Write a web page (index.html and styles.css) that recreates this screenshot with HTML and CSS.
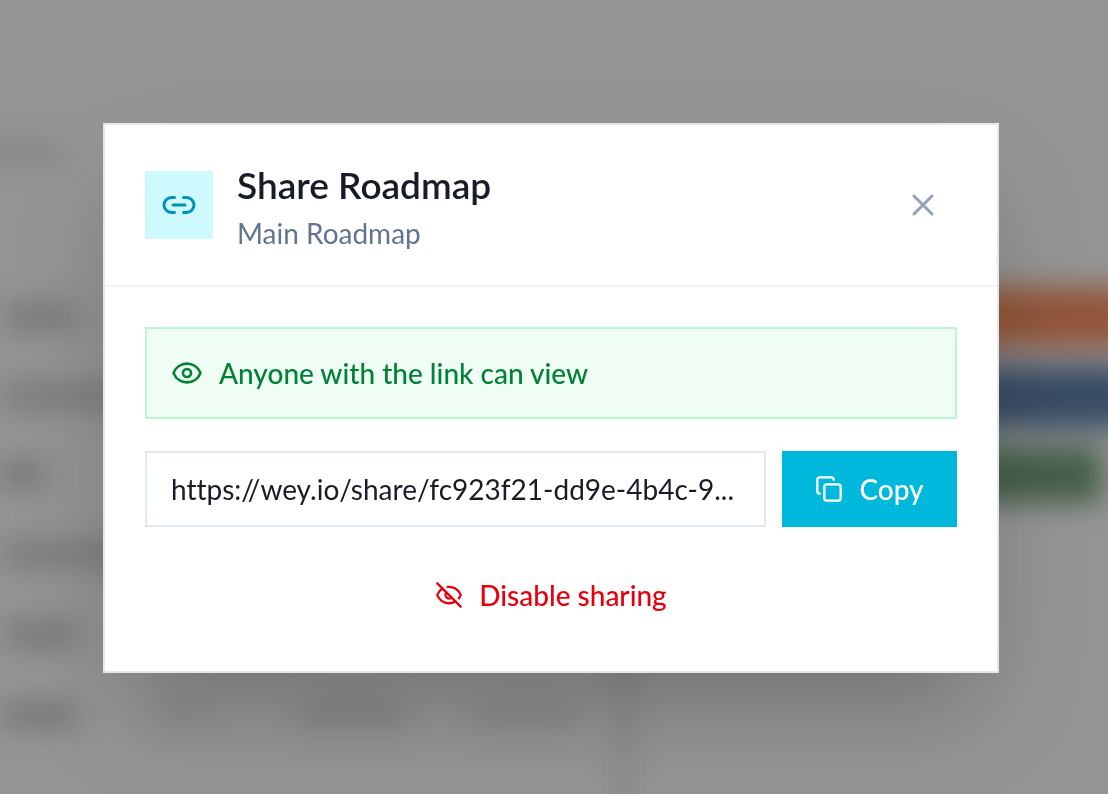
FILE: index.html
```html
<!DOCTYPE html>
<html lang="en">
<head>
<meta charset="utf-8">
<meta name="viewport" content="width=device-width, initial-scale=1">
<title>Share Roadmap</title>
<link rel="stylesheet" href="styles.css">
</head>
<body>
<svg class="backdrop" viewBox="0 0 1108 794" preserveAspectRatio="xMidYMid slice" aria-hidden="true">
  <defs>
    <filter id="soft" x="-200" y="-200" width="1600" height="1200" filterUnits="userSpaceOnUse" color-interpolation-filters="sRGB"><feGaussianBlur stdDeviation="14"/></filter>
  </defs>
  <g filter="url(#soft)">
    <g fill="#72726f">
      <rect x="-40" y="141" width="100" height="24" opacity=".4"/>
      <rect x="2" y="303" width="76" height="28" opacity=".75"/>
      <rect x="0" y="382" width="150" height="28" opacity=".7"/>
      <rect x="-4" y="461" width="50" height="28" opacity=".8"/>
      <rect x="0" y="540" width="150" height="28" opacity=".7"/>
      <rect x="2" y="620" width="78" height="28" opacity=".75"/>
      <rect x="0" y="701" width="78" height="28" opacity=".8"/>
      <rect x="155" y="703" width="50" height="20" opacity=".3"/>
      <rect x="300" y="703" width="104" height="22" opacity=".5"/>
      <rect x="475" y="703" width="104" height="22" opacity=".4"/>
      <rect x="616" y="640" width="16" height="220" opacity=".4"/>
    </g>
    <rect x="850" y="287" width="340" height="60" fill="#92563a"/>
    <rect x="850" y="366" width="340" height="62" fill="#384c63"/>
    <rect x="850" y="447" width="252" height="56" fill="#455f49"/>
  </g>
</svg>

<div class="overlay">
  <section class="dialog" role="dialog" aria-modal="true" aria-labelledby="dialog-title">
    <header class="dialog-header">
      <span class="badge">
        <svg class="icon icon-lg" viewBox="0 0 24 24" aria-hidden="true"><path d="M9 17H7A5 5 0 0 1 7 7h2"/><path d="M15 7h2a5 5 0 1 1 0 10h-2"/><path d="M8 12h8"/></svg>
      </span>
      <div class="heading">
        <h2 class="title" id="dialog-title">Share Roadmap</h2>
        <p class="subtitle">Main Roadmap</p>
      </div>
      <button class="close" type="button" aria-label="Close">
        <svg class="icon icon-lg" viewBox="0 0 24 24" aria-hidden="true"><path d="M18 6 6 18"/><path d="m6 6 12 12"/></svg>
      </button>
    </header>
    <div class="dialog-body">
      <div class="notice">
        <svg class="icon icon-md" viewBox="0 0 24 24" aria-hidden="true"><path d="M2.062 12.348a1 1 0 0 1 0-.696 10.75 10.75 0 0 1 19.876 0 1 1 0 0 1 0 .696 10.75 10.75 0 0 1-19.876 0"/><circle cx="12" cy="12" r="3"/></svg>
        <span>Anyone with the link can view</span>
      </div>
      <div class="link-row">
        <input class="link-input" type="text" readonly aria-label="Share link" value="https://wey.io/share/fc923f21-dd9e-4b4c-9...">
        <button class="copy" type="button">
          <svg class="icon icon-sm" viewBox="0 0 24 24" aria-hidden="true"><rect x="8" y="8" width="14" height="14" rx="2"/><path d="M4 16c-1.1 0-2-.9-2-2V4c0-1.1.9-2 2-2h10c1.1 0 2 .9 2 2"/></svg>
          <span>Copy</span>
        </button>
      </div>
      <button class="disable" type="button">
        <svg class="icon icon-sm" viewBox="0 0 24 24" aria-hidden="true"><path d="M10.733 5.076a10.744 10.744 0 0 1 11.205 6.575 1 1 0 0 1 0 .696 10.747 10.747 0 0 1-1.444 2.49"/><path d="M14.084 14.158a3 3 0 0 1-4.242-4.242"/><path d="M17.479 17.499a10.75 10.75 0 0 1-15.417-5.151 1 1 0 0 1 0-.696 10.75 10.75 0 0 1 4.446-5.143"/><path d="m2 2 20 20"/></svg>
        <span>Disable sharing</span>
      </button>
    </div>
  </section>
</div>
</body>
</html>
```
FILE: styles.css
```css
* {
  box-sizing: border-box;
}

body {
  margin: 0;
  background: #959595;
  color: #171c26;
  font-family: Lato, "Liberation Sans", sans-serif;
  font-size: 28px;
  font-variant-ligatures: none;
  line-height: 40px;
}

button,
input {
  font: inherit;
  font-variant-ligatures: none;
  border-radius: 0;
}

button {
  border: 0;
  background: none;
  cursor: pointer;
}

.backdrop {
  position: fixed;
  inset: 0;
  width: 100%;
  height: 100%;
}

.overlay {
  position: relative;
  display: flex;
  align-items: center;
  justify-content: center;
  min-height: 100vh;
  padding: 26px 30px 24px 24px;
}

.dialog {
  width: 100%;
  max-width: 896px;
  background: #fff;
  border: 2px solid #e2e8f0;
  box-shadow: 0 50px 100px -24px rgba(0, 0, 0, 0.25);
}

.dialog-header {
  display: flex;
  align-items: center;
  gap: 24px;
  padding: 32px 40px;
  border-bottom: 2px solid #f1f5f9;
}

.badge {
  display: flex;
  padding: 16px;
  background: #cefafe;
  color: #0092b8;
}

.icon {
  display: block;
  flex: none;
  fill: none;
  stroke: currentColor;
  stroke-width: 2;
  stroke-linecap: round;
  stroke-linejoin: round;
}

.icon-lg {
  width: 36px;
  height: 36px;
}

.icon-md {
  width: 32px;
  height: 32px;
}

.icon-sm {
  width: 28px;
  height: 28px;
}

.heading {
  flex: 1;
  min-width: 0;
}

.title {
  margin: 0;
  font-size: 37px;
  font-weight: 600;
  line-height: 56px;
}

.subtitle {
  margin: 0;
  color: #62748e;
}

.close {
  padding: 16px;
  color: #90a1b9;
}

.dialog-body {
  display: flex;
  flex-direction: column;
  gap: 32px;
  padding: 40px;
}

.notice {
  display: flex;
  align-items: center;
  gap: 16px;
  padding: 24px;
  background: #f0fdf4;
  border: 2px solid #b9f8cf;
  color: #008236;
  font-weight: 500;
}

.link-row {
  display: flex;
  gap: 16px;
}

.link-input {
  flex: 1;
  min-width: 0;
  padding: 16px 24px;
  background: #fff;
  border: 2px solid #e2e8f0;
  color: inherit;
  text-overflow: ellipsis;
}

.copy,
.disable {
  display: flex;
  align-items: center;
  justify-content: center;
  gap: 16px;
  padding: 16px 32px;
  font-weight: 500;
}

.copy {
  min-width: 175px;
  background: #00b8db;
  color: #fff;
}

.disable {
  color: #e7000b;
}
```
